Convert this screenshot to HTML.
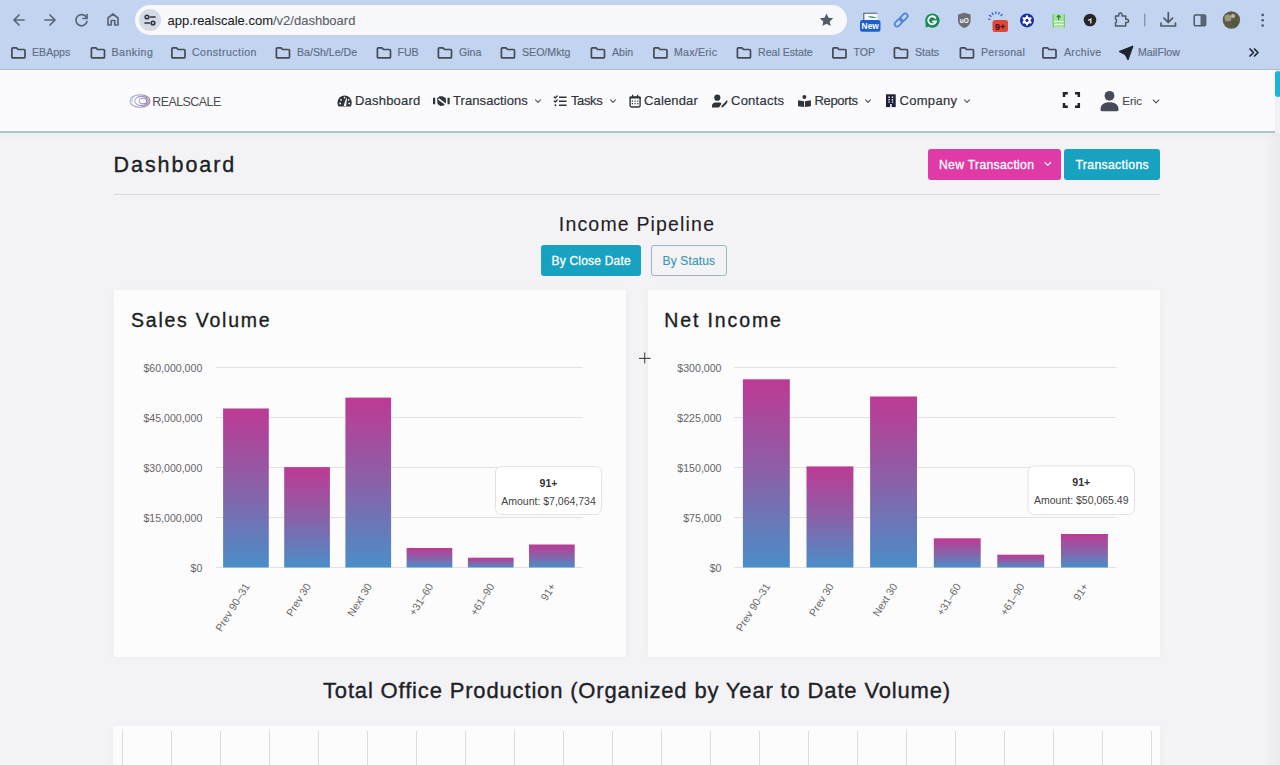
<!DOCTYPE html>
<html><head><meta charset="utf-8">
<style>
*{box-sizing:border-box;margin:0;padding:0}
html,body{width:1280px;height:765px;overflow:hidden;background:#f3f3f6;font-family:"Liberation Sans",sans-serif}
.a{position:absolute}
.chrome{left:0;top:0;width:1280px;height:70px;background:#c2d4ef;border-bottom:1px solid #aebbd0}
.pill{left:135px;top:5px;width:712px;height:30px;border-radius:15px;background:#f6f8fb}
.url{left:167.5px;top:12.6px;-webkit-text-stroke:0.1px currentColor;font-size:13px;color:#1f1f1f;white-space:nowrap}
.url span{color:#5b5f66}
.bm{top:46px;font-size:10.6px;color:#5f6d82;-webkit-text-stroke:0.15px currentColor;white-space:nowrap}
.nav{left:0;top:70px;width:1275px;height:63px;background:#fbfbfd;border-bottom:2px solid #a8c4cf;box-shadow:0 3px 8px rgba(0,0,0,.03)}
.ni{top:93px;font-size:13px;color:#30353c;white-space:nowrap;-webkit-text-stroke:0.2px currentColor}
.t{white-space:nowrap;color:#1d2025}
.btn{border-radius:3px}
.h{-webkit-text-stroke:0.35px currentColor}
.h2{-webkit-text-stroke:0.1px currentColor}
.card{background:#fcfcfd;box-shadow:0 2px 8px rgba(0,0,0,.035)}
</style></head><body>
<div class="a chrome"></div>
<!-- nav buttons -->
<svg class="a" style="left:0;top:0" width="135" height="40" viewBox="0 0 135 40">
 <g fill="none" stroke="#5b6677" stroke-width="1.7" stroke-linecap="round" stroke-linejoin="round">
  <path d="M24 20H14M19 15l-5 5 5 5"/>
  <path d="M45 20h10M50 15l5 5-5 5"/>
  <path d="M86.5 17.5A5.6 5.6 0 1 0 87 21.5"/>
  <path d="M87 14.5v4h-4"/>
  <path d="M108 25v-7l5-4 5 4v7h-3.2v-4.5h-3.6V25z"/>
 </g>
</svg>
<div class="a pill"></div>
<div class="a" style="left:139px;top:9px;width:22px;height:22px;border-radius:11px;background:#d4dbe7"></div>
<svg class="a" style="left:139px;top:9px" width="22" height="22" viewBox="0 0 22 22">
 <g fill="none" stroke="#2f3540" stroke-width="1.6" stroke-linecap="round">
  <circle cx="8" cy="8" r="1.8"/><path d="M11.5 8H16"/>
  <circle cx="14" cy="14" r="1.8"/><path d="M6 14h4.5"/>
 </g>
</svg>
<div class="a url">app.realscale.com<span>/v2/dashboard</span></div>
<svg class="a" style="left:818px;top:12px" width="17" height="16" viewBox="0 0 17 16">
 <path d="M8.5 1.5l2 4.3 4.7.5-3.5 3.2 1 4.6-4.2-2.4-4.2 2.4 1-4.6L1.8 6.3l4.7-.5z" fill="#535b68"/>
</svg>
<!-- extension icons -->
<svg class="a" style="left:850px;top:4px" width="430" height="34" viewBox="850 4 430 34">
 <!-- New -->
 <rect x="863.5" y="13" width="14" height="8" fill="#f7f8fa"/>
 <path d="M863.8 20.5V13.3h13.5" stroke="#4a5a6e" stroke-width="1.1" fill="none"/>
 <path d="M867.5 16.8q4-1.6 9.5 1.2q-5 .2-9.5-1.2z" fill="#2f7d6a"/>
 <rect x="860" y="20" width="20.5" height="11.8" rx="2.5" fill="#1e5fd0"/>
 <text x="870.2" y="29.2" font-size="8.4" font-weight="700" fill="#fff" text-anchor="middle" font-family="Liberation Sans">New</text>
 <!-- link -->
 <g fill="none" stroke="#4d84d8" stroke-width="1.7" transform="rotate(-45 901.2 20)">
  <rect x="893" y="17.6" width="9" height="4.8" rx="2.4"/>
  <rect x="900.4" y="17.6" width="9" height="4.8" rx="2.4"/>
 </g>
 <!-- grammarly -->
 <circle cx="932.4" cy="20.6" r="7.2" fill="#148a55"/><path d="M925.5 22l.3 5.5 4-1.5z" fill="#148a55"/>
 <path d="M935.5 18a4 4 0 1 0 .5 3.5h-3" fill="none" stroke="#fff" stroke-width="1.8" stroke-linecap="round"/>
 <!-- ublock -->
 <path d="M958 14.5l6.3-1.8 6.3 1.8v6c0 4-3 6.4-6.3 7.5-3.3-1.1-6.3-3.5-6.3-7.5z" fill="#6c6e74"/>
 <text x="964.3" y="23" font-size="6.5" font-weight="700" fill="#fff" text-anchor="middle" font-family="Liberation Sans">uO</text>
 <!-- 9+ icon -->
 <g stroke="#2f4fd0" stroke-width="1.2" stroke-linecap="round" fill="none">
  <path d="M990 19.5l-1.5-.5M991 16.5l-1.5-1.2M993 14.5l-.8-1.5M995.8 13.5v-1.6M998.6 14l.6-1.5M1001 15.5l1.2-1.1"/>
 </g>
 <rect x="992.5" y="20" width="15.5" height="12" rx="2.5" fill="#e0463a"/>
 <text x="1000.2" y="29.6" font-size="9" font-weight="700" fill="#3a1010" text-anchor="middle" font-family="Liberation Sans">9+</text>
 <!-- blue gear -->
 <circle cx="1027" cy="20.4" r="7" fill="#1b2ea6"/>
 <g fill="#fff" transform="translate(1027 20.4)">
  <circle r="3.6"/>
  <rect x="-1" y="-5" width="2" height="10"/>
  <rect x="-1" y="-5" width="2" height="10" transform="rotate(60)"/>
  <rect x="-1" y="-5" width="2" height="10" transform="rotate(120)"/>
 </g>
 <circle cx="1027" cy="20.4" r="1.6" fill="#1b2ea6"/>
 <!-- sheet -->
 <rect x="1052.5" y="14" width="12.5" height="13.5" rx="1" fill="#a6e49c"/>
 <path d="M1053.2 14v13.5M1064.3 14v13.5" stroke="#6cc070" stroke-width="1"/>
 <path d="M1054 21.5h9.5M1054 24.5h9.5" stroke="#e8f8e4" stroke-width="1"/>
 <path d="M1058.7 20v-4.5M1056.8 17.3l1.9-2 1.9 2" stroke="#2a7a3a" stroke-width="1.1" fill="none"/>
 <!-- dark circle -->
 <circle cx="1090" cy="20" r="6.3" fill="#262626"/>
 <path d="M1088 20.5l2.8-1.5v4.5" stroke="#e8e8e8" stroke-width="1.3" fill="none"/>
 <!-- puzzle -->
 <path d="M1115.5 16h3.2v-1.2a1.7 1.7 0 0 1 3.4 0V16h3.6v3.2h1.2a1.7 1.7 0 0 1 0 3.4h-1.2v3.4h-10.2v-3.3a2 2 0 0 0 0-3.6z" fill="none" stroke="#4f5866" stroke-width="1.5" stroke-linejoin="round"/>
 <!-- separator -->
 <path d="M1144.8 13.8v12.4" stroke="#7d8aa0" stroke-width="1.2"/>
 <!-- download -->
 <g fill="none" stroke="#4f5866" stroke-width="1.7" stroke-linecap="round" stroke-linejoin="round">
  <path d="M1168.3 12.5v10M1164 18.2l4.3 4.3 4.3-4.3M1161 23.2v2.8h14.5v-2.8"/>
 </g>
 <!-- sidebar -->
 <rect x="1194.2" y="15" width="11.4" height="10.8" rx="1.2" fill="none" stroke="#4f5866" stroke-width="1.5"/>
 <rect x="1200.5" y="15" width="5" height="10.8" fill="#5a6474"/>
 <!-- avatar -->
 <circle cx="1231.4" cy="20" r="8.7" fill="#5e5a48"/>
 <circle cx="1228" cy="18" r="3.5" fill="#9a9a7a"/>
 <circle cx="1235" cy="23" r="3" fill="#4a5a3a"/>
 <circle cx="1233" cy="16" r="2" fill="#c8b890"/>
 <!-- kebab -->
 <g fill="#4f5866"><circle cx="1262.7" cy="14.9" r="1.3"/><circle cx="1262.7" cy="20.2" r="1.3"/><circle cx="1262.7" cy="25.5" r="1.3"/></g>
</svg>
<!-- bookmarks -->
<svg class="a" style="left:0;top:40px" width="1280" height="28" viewBox="0 40 1280 28">
 <defs>
  <path id="fd" d="M0.9 1.9a1 1 0 0 1 1-1h3.6l1.5 1.6h6a1 1 0 0 1 1 1v6.4a1 1 0 0 1-1 1H1.9a1 1 0 0 1-1-1z" fill="none" stroke="#434a56" stroke-width="1.7" stroke-linejoin="round"/>
 </defs>
 <use href="#fd" x="11" y="47"/>
 <use href="#fd" x="90.5" y="47"/>
 <use href="#fd" x="171" y="47"/>
 <use href="#fd" x="275.5" y="47"/>
 <use href="#fd" x="376.5" y="47"/>
 <use href="#fd" x="437.5" y="47"/>
 <use href="#fd" x="500.5" y="47"/>
 <use href="#fd" x="590.5" y="47"/>
 <use href="#fd" x="653" y="47"/>
 <use href="#fd" x="736.5" y="47"/>
 <use href="#fd" x="832" y="47"/>
 <use href="#fd" x="893.5" y="47"/>
 <use href="#fd" x="959.5" y="47"/>
 <use href="#fd" x="1042" y="47"/>
 <path d="M1119 51.5l14-5.5-5 14-2.8-5.3z M1125.2 54.7l7.8-8.7" fill="#1f242c" stroke="#1f242c" stroke-width="1" stroke-linejoin="round"/>
 <path d="M1250 49l3.5 3.5-3.5 3.5M1254.5 49l3.5 3.5-3.5 3.5" fill="none" stroke="#1f242c" stroke-width="1.7" stroke-linecap="round" stroke-linejoin="round"/>
</svg>
<div class="a bm" style="left:32px">EBApps</div>
<div class="a bm" style="left:111.5px;letter-spacing:0.5px">Banking</div>
<div class="a bm" style="left:192px;letter-spacing:0.45px">Construction</div>
<div class="a bm" style="left:297px">Ba/Sh/Le/De</div>
<div class="a bm" style="left:397.5px">FUB</div>
<div class="a bm" style="left:459px">Gina</div>
<div class="a bm" style="left:522px">SEO/Mktg</div>
<div class="a bm" style="left:612px">Abin</div>
<div class="a bm" style="left:674px;letter-spacing:0.25px">Max/Eric</div>
<div class="a bm" style="left:758px">Real Estate</div>
<div class="a bm" style="left:853.5px">TOP</div>
<div class="a bm" style="left:915px">Stats</div>
<div class="a bm" style="left:981px;letter-spacing:0.3px">Personal</div>
<div class="a bm" style="left:1064px;letter-spacing:0.3px">Archive</div>
<div class="a bm" style="left:1138px">MailFlow</div>
<div class="a nav"></div>
<!-- logo -->
<svg class="a" style="left:128px;top:92px" width="24" height="18" viewBox="0 0 24 18">
 <defs><linearGradient id="lg" x1="0" x2="1"><stop offset="0" stop-color="#a9b6d8"/><stop offset="1" stop-color="#9a7aa8"/></linearGradient></defs>
 <g fill="none" stroke="url(#lg)" stroke-width="1.1">
  <ellipse cx="12" cy="9" rx="10" ry="6.3"/>
  <ellipse cx="13.5" cy="9" rx="6.8" ry="4.6"/>
  <ellipse cx="15" cy="9" rx="3.8" ry="2.8"/>
 </g>
 <path d="M2 9a10 6.3 0 0 1 8-6.2C6 4 4 7 5 11" fill="#b8c3e0" opacity=".6"/>
</svg>
<div class="a t" style="left:152.3px;top:96px;font-size:12.3px;line-height:12px;letter-spacing:-0.45px;color:#4a4b53">REALSCALE</div>
<!-- nav icons -->
<svg class="a" style="left:330px;top:88px" width="660" height="26" viewBox="330 88 660 26">
 <g fill="#2f343b">
  <!-- tachometer -->
  <path d="M338.6 106.6C337.9 105.6 337.5 104.1 337.5 102.5A7.1 7.1 0 0 1 351.7 102.5C351.7 104.1 351.3 105.6 350.6 106.6z"/>
  <!-- handshake -->
  <path d="M433 97.8h2.2v6.4H433z M447.5 97.8h2.2v6.4h-2.2z M437 98.5l2.5-2.3h3l3.2 1.8.4 4.5-2.3 3-3.5.6-2.7-2.2z"/>
  <!-- tasks -->
  <path d="M559 96.4h7.6v1.5H559zM559 100.5h7.6v1.5H559zM559 104.4h7.6v1.5H559z"/><circle cx="555.4" cy="105.2" r="1"/>
  <!-- calendar -->
  <rect x="630.1" y="97" width="10" height="10" rx="1.4" fill="none" stroke="#2f343b" stroke-width="1.4"/>
  <path d="M629.4 96.8h11.4v1.6h-11.4z M632 94.7h1.3v3h-1.3z M637 94.7h1.3v3h-1.3z"/>
  <path d="M631.8 100.4h1.2v1.3h-1.2zM634.5 100.4h1.2v1.3h-1.2zM637.2 100.4h1.2v1.3h-1.2zM631.8 102.9h1.2v1.3h-1.2zM634.5 102.9h1.2v1.3h-1.2zM637.2 102.9h1.2v1.3h-1.2z"/>
  <!-- contacts -->
  <circle cx="717.3" cy="97.7" r="3.1"/>
  <path d="M712 107.4v-1.8c0-1.9 1.5-3.2 3.3-3.2h3.6c1.3 0 2.2.5 2.7 1.1l-2.6 3.9z"/>
  <path d="M721.3 107.6l.4-1.9 4-4.1 1.4 1.4-4 4.1z"/>
  <circle cx="726.7" cy="101.5" r="0.9"/>
  <!-- reports -->
  <circle cx="804.4" cy="97" r="2"/>
  <path d="M798 100.3l6 0.9v5.9l-6-0.8z M810.9 100.3l-6 0.9v5.9l6-0.8z"/>
  <!-- company -->
  <path d="M886 94.3h9.7v12.8H886z" fill="#1c1f38"/>
 </g>
 <g fill="#fbfbfd">
  <path d="M437.8 99.5l1.3-1.3 7 5.6-1 1z"/><circle cx="340.2" cy="103.5" r="0.9"/><circle cx="341" cy="99.8" r="0.9"/><circle cx="344.6" cy="97.6" r="0.9"/><circle cx="348.6" cy="99.8" r="0.9"/><circle cx="349.2" cy="103.5" r="0.9"/><path d="M343.6 106h2.6l0.8-7.6-0.9-.1z"/>
  <path d="M888.4 96.6h1.4v1.3h-1.4zM891.8 96.6h1.4v1.3h-1.4zM888.4 99.1h1.4v1.3h-1.4zM891.8 99.1h1.4v1.3h-1.4zM888.4 101.5h1.4v1.3h-1.4zM891.8 101.5h1.4v1.3h-1.4zM890.1 104h1.6v3.1h-1.6z"/>
  
 </g>
 <g fill="none" stroke="#2f343b" stroke-width="1.4" stroke-linecap="round" stroke-linejoin="round">
  <path d="M554.3 97l1 1.1 1.9-2M554.3 101l1 1.1 1.9-2"/>
  <path d="M535.5 99.8l2.5 2.5 2.5-2.5M610.5 99.8l2.5 2.5 2.5-2.5M865.5 99.8l2.5 2.5 2.5-2.5M964.5 99.8l2.5 2.5 2.5-2.5" stroke-width="1.1" stroke="#555"/>
 </g>
</svg>
<div class="a ni" style="left:355px;letter-spacing:0.2px">Dashboard</div>
<div class="a ni" style="left:453px;letter-spacing:0.08px">Transactions</div>
<div class="a ni" style="left:571px;letter-spacing:-0.4px">Tasks</div>
<div class="a ni" style="left:644px;letter-spacing:0.15px">Calendar</div>
<div class="a ni" style="left:731px;letter-spacing:0.25px">Contacts</div>
<div class="a ni" style="left:814.5px;letter-spacing:-0.35px">Reports</div>
<div class="a ni" style="left:899.5px;letter-spacing:0.3px">Company</div>
<!-- fullscreen -->
<svg class="a" style="left:1060px;top:90px" width="22" height="22" viewBox="1060 90 22 22">
 <path d="M1064 97v-3.8h3.8M1075 93.2h3.8V97M1078.8 103v3.8H1075M1067.8 106.8H1064V103" fill="none" stroke="#222" stroke-width="2.5"/>
</svg>
<!-- user -->
<svg class="a" style="left:1098px;top:89px" width="64" height="24" viewBox="1098 89 64 24">
 <circle cx="1109.5" cy="95.8" r="4.9" fill="#474a5a"/>
 <path d="M1100.5 109.5c0-5 3.5-7.2 9-7.2s9 2.2 9 7.2c0 1-.6 1.7-1.5 1.7h-15c-.9 0-1.5-.7-1.5-1.7z" fill="#474a5a"/>
 <path d="M1153.3 100l2.8 2.8 2.8-2.8" fill="none" stroke="#555" stroke-width="1.1" stroke-linecap="round" stroke-linejoin="round"/>
</svg>
<div class="a ni" style="left:1122.3px;font-size:11.5px;top:94.6px;color:#444;-webkit-text-stroke:0.1px currentColor">Eric</div>
<!-- scrollbar thumb -->
<div class="a" style="left:1266px;top:133px;width:14px;height:632px;background:linear-gradient(90deg,rgba(236,236,240,0),#ececf0 70%)"></div>
<div class="a" style="left:1275px;top:71px;width:6px;height:26px;border-radius:3px;background:#1ab4de"></div>
<!--MAIN-->
<div class="a t h" style="left:113.5px;top:154px;font-size:21.5px;line-height:22px;letter-spacing:1.95px;color:#1b1f24">Dashboard</div>
<div class="a" style="left:114px;top:194px;width:1046px;height:1px;background:#d9d9de"></div>
<div class="a btn" style="left:928px;top:149px;width:133px;height:31px;background:#e03aa6"></div>
<div class="a t" style="left:939px;top:158.5px;font-size:12.2px;line-height:13px;letter-spacing:0.3px;color:#fff;-webkit-text-stroke:0.3px #fff">New Transaction</div>
<svg class="a" style="left:1043px;top:160px" width="10" height="8"><path d="M2 2.5l2.8 2.8 2.8-2.8" fill="none" stroke="#fff" stroke-width="1.1" stroke-linecap="round" stroke-linejoin="round"/></svg>
<div class="a btn" style="left:1064px;top:149px;width:96px;height:31px;background:#18a2c2"></div>
<div class="a t" style="left:1075.5px;top:158.5px;font-size:12.2px;line-height:13px;letter-spacing:0.35px;color:#fff;-webkit-text-stroke:0.3px #fff">Transactions</div>
<div class="a t h2" style="left:0;width:1274px;text-align:center;top:213.5px;font-size:19.5px;line-height:20px;letter-spacing:1.17px;color:#1e2126">Income Pipeline</div>
<div class="a btn" style="left:541px;top:245px;width:100px;height:31px;background:#18a2c2"></div>
<div class="a t" style="left:551.5px;top:254.5px;font-size:12px;line-height:13px;letter-spacing:0.2px;color:#fff;-webkit-text-stroke:0.3px #fff">By Close Date</div>
<div class="a btn" style="left:651px;top:245px;width:76px;height:31px;border:1px solid #98b7c0;background:transparent"></div>
<div class="a t" style="left:662.5px;top:254.5px;font-size:12px;line-height:13px;letter-spacing:0.15px;color:#3c97b0;-webkit-text-stroke:0.15px currentColor">By Status</div>

<div class="a card" style="left:114px;top:290px;width:512px;height:367px"></div>
<div class="a t h" style="left:131.1px;top:310.2px;font-size:19.5px;line-height:20px;letter-spacing:1.75px;color:#1b1e22">Sales Volume</div>
<svg class="a" style="left:114px;top:290px" width="512" height="367" viewBox="114 290 512 367">
<defs><linearGradient id="bg" x1="0" y1="0" x2="0" y2="1"><stop offset="0" stop-color="#bd3a94"/><stop offset="0.5" stop-color="#8a61a8"/><stop offset="1" stop-color="#4a8ec8"/></linearGradient></defs>
<path d="M216 367.5H582.5" stroke="#e2e2e4" stroke-width="1"/>
<text x="202.3" y="372.1" text-anchor="end" font-size="10.6" fill="#666" font-family="Liberation Sans">$60,000,000</text>
<path d="M216 417.5H582.5" stroke="#e2e2e4" stroke-width="1"/>
<text x="202.3" y="422.1" text-anchor="end" font-size="10.6" fill="#666" font-family="Liberation Sans">$45,000,000</text>
<path d="M216 467.5H582.5" stroke="#e2e2e4" stroke-width="1"/>
<text x="202.3" y="472.1" text-anchor="end" font-size="10.6" fill="#666" font-family="Liberation Sans">$30,000,000</text>
<path d="M216 517.5H582.5" stroke="#e2e2e4" stroke-width="1"/>
<text x="202.3" y="522.1" text-anchor="end" font-size="10.6" fill="#666" font-family="Liberation Sans">$15,000,000</text>
<path d="M216 567.5H582.5" stroke="#e2e2e4" stroke-width="1"/>
<text x="202.3" y="572.1" text-anchor="end" font-size="10.6" fill="#666" font-family="Liberation Sans">$0</text>
<rect x="223.1" y="408.5" width="45.7" height="159.0" fill="url(#bg)"/>
<rect x="284.2" y="467.1" width="45.7" height="100.4" fill="url(#bg)"/>
<rect x="345.4" y="397.6" width="45.7" height="169.9" fill="url(#bg)"/>
<rect x="406.6" y="548" width="45.7" height="19.5" fill="url(#bg)"/>
<rect x="467.9" y="557.7" width="45.7" height="9.8" fill="url(#bg)"/>
<rect x="529.0" y="544.5" width="45.7" height="23.0" fill="url(#bg)"/>
<text transform="translate(247.1,584.5) rotate(-58)" text-anchor="end" font-size="10.6" fill="#666" font-family="Liberation Sans" dy="3.5">Prev 90–31</text>
<text transform="translate(308.3,584.5) rotate(-58)" text-anchor="end" font-size="10.6" fill="#666" font-family="Liberation Sans" dy="3.5">Prev 30</text>
<text transform="translate(369.5,584.5) rotate(-58)" text-anchor="end" font-size="10.6" fill="#666" font-family="Liberation Sans" dy="3.5">Next 30</text>
<text transform="translate(430.7,584.5) rotate(-58)" text-anchor="end" font-size="10.6" fill="#666" font-family="Liberation Sans" dy="3.5">+31–60</text>
<text transform="translate(491.9,584.5) rotate(-58)" text-anchor="end" font-size="10.6" fill="#666" font-family="Liberation Sans" dy="3.5">+61–90</text>
<text transform="translate(553.1,584.5) rotate(-58)" text-anchor="end" font-size="10.6" fill="#666" font-family="Liberation Sans" dy="3.5">91+</text>
<rect x="495.5" y="466.5" width="106.0" height="48.0" rx="6" fill="#fff" stroke="#e3e3e6" stroke-width="1"/>
<text x="548.5" y="486.5" text-anchor="middle" font-size="10.6" font-weight="700" fill="#333" font-family="Liberation Sans">91+</text>
<text x="548.5" y="504.5" text-anchor="middle" font-size="10.5" fill="#444" font-family="Liberation Sans">Amount: $7,064,734</text>
</svg>
<div class="a card" style="left:648px;top:290px;width:512px;height:367px"></div>
<div class="a t h" style="left:664.3px;top:310.2px;font-size:19.5px;line-height:20px;letter-spacing:1.87px;color:#1b1e22">Net Income</div>
<svg class="a" style="left:648px;top:290px" width="512" height="367" viewBox="648 290 512 367">
<defs><linearGradient id="bg" x1="0" y1="0" x2="0" y2="1"><stop offset="0" stop-color="#bd3a94"/><stop offset="0.5" stop-color="#8a61a8"/><stop offset="1" stop-color="#4a8ec8"/></linearGradient></defs>
<path d="M734 367.5H1116.5" stroke="#e2e2e4" stroke-width="1"/>
<text x="721.5" y="372.1" text-anchor="end" font-size="10.6" fill="#666" font-family="Liberation Sans">$300,000</text>
<path d="M734 417.5H1116.5" stroke="#e2e2e4" stroke-width="1"/>
<text x="721.5" y="422.1" text-anchor="end" font-size="10.6" fill="#666" font-family="Liberation Sans">$225,000</text>
<path d="M734 467.5H1116.5" stroke="#e2e2e4" stroke-width="1"/>
<text x="721.5" y="472.1" text-anchor="end" font-size="10.6" fill="#666" font-family="Liberation Sans">$150,000</text>
<path d="M734 517.5H1116.5" stroke="#e2e2e4" stroke-width="1"/>
<text x="721.5" y="522.1" text-anchor="end" font-size="10.6" fill="#666" font-family="Liberation Sans">$75,000</text>
<path d="M734 567.5H1116.5" stroke="#e2e2e4" stroke-width="1"/>
<text x="721.5" y="572.1" text-anchor="end" font-size="10.6" fill="#666" font-family="Liberation Sans">$0</text>
<rect x="742.9" y="379.3" width="46.9" height="188.2" fill="url(#bg)"/>
<rect x="806.5" y="466.4" width="46.9" height="101.1" fill="url(#bg)"/>
<rect x="870.1" y="396.5" width="46.9" height="171.0" fill="url(#bg)"/>
<rect x="933.8" y="538.3" width="46.9" height="29.2" fill="url(#bg)"/>
<rect x="997.3" y="554.7" width="46.9" height="12.8" fill="url(#bg)"/>
<rect x="1061.0" y="534" width="46.9" height="33.5" fill="url(#bg)"/>
<text transform="translate(767.6,584.5) rotate(-58)" text-anchor="end" font-size="10.6" fill="#666" font-family="Liberation Sans" dy="3.5">Prev 90–31</text>
<text transform="translate(831.2,584.5) rotate(-58)" text-anchor="end" font-size="10.6" fill="#666" font-family="Liberation Sans" dy="3.5">Prev 30</text>
<text transform="translate(894.8,584.5) rotate(-58)" text-anchor="end" font-size="10.6" fill="#666" font-family="Liberation Sans" dy="3.5">Next 30</text>
<text transform="translate(958.4,584.5) rotate(-58)" text-anchor="end" font-size="10.6" fill="#666" font-family="Liberation Sans" dy="3.5">+31–60</text>
<text transform="translate(1022.0,584.5) rotate(-58)" text-anchor="end" font-size="10.6" fill="#666" font-family="Liberation Sans" dy="3.5">+61–90</text>
<text transform="translate(1085.6,584.5) rotate(-58)" text-anchor="end" font-size="10.6" fill="#666" font-family="Liberation Sans" dy="3.5">91+</text>
<rect x="1028" y="466" width="106.5" height="48.5" rx="6" fill="#fff" stroke="#e3e3e6" stroke-width="1"/>
<text x="1081.25" y="486" text-anchor="middle" font-size="10.6" font-weight="700" fill="#333" font-family="Liberation Sans">91+</text>
<text x="1081.25" y="504" text-anchor="middle" font-size="10.5" fill="#444" font-family="Liberation Sans">Amount: $50,065.49</text>
</svg>
<svg class="a" style="left:636px;top:350px" width="18" height="18" viewBox="636 350 18 18"><path d="M644.7 352.5v11M639 358.3h11.5" stroke="#fff" stroke-width="3"/><path d="M644.7 352.5v11M639 358.3h11.5" stroke="#4a4a4a" stroke-width="1.2"/></svg>
<div class="a t h" style="left:0;width:1274px;text-align:center;top:679.5px;font-size:22px;line-height:22px;letter-spacing:0.84px;color:#1e2126">Total Office Production (Organized by Year to Date Volume)</div>
<div class="a card" style="left:113px;top:725.5px;width:1047px;height:60px"></div>

<div class="a" style="left:122px;top:731px;width:1px;height:40px;background:#dcdce0"></div><div class="a" style="left:171px;top:731px;width:1px;height:40px;background:#dcdce0"></div><div class="a" style="left:220px;top:731px;width:1px;height:40px;background:#dcdce0"></div><div class="a" style="left:269px;top:731px;width:1px;height:40px;background:#dcdce0"></div><div class="a" style="left:318px;top:731px;width:1px;height:40px;background:#dcdce0"></div><div class="a" style="left:367px;top:731px;width:1px;height:40px;background:#dcdce0"></div><div class="a" style="left:416px;top:731px;width:1px;height:40px;background:#dcdce0"></div><div class="a" style="left:465px;top:731px;width:1px;height:40px;background:#dcdce0"></div><div class="a" style="left:514px;top:731px;width:1px;height:40px;background:#dcdce0"></div><div class="a" style="left:563px;top:731px;width:1px;height:40px;background:#dcdce0"></div><div class="a" style="left:612px;top:731px;width:1px;height:40px;background:#dcdce0"></div><div class="a" style="left:661px;top:731px;width:1px;height:40px;background:#dcdce0"></div><div class="a" style="left:710px;top:731px;width:1px;height:40px;background:#dcdce0"></div><div class="a" style="left:759px;top:731px;width:1px;height:40px;background:#dcdce0"></div><div class="a" style="left:808px;top:731px;width:1px;height:40px;background:#dcdce0"></div><div class="a" style="left:857px;top:731px;width:1px;height:40px;background:#dcdce0"></div><div class="a" style="left:906px;top:731px;width:1px;height:40px;background:#dcdce0"></div><div class="a" style="left:955px;top:731px;width:1px;height:40px;background:#dcdce0"></div><div class="a" style="left:1004px;top:731px;width:1px;height:40px;background:#dcdce0"></div><div class="a" style="left:1053px;top:731px;width:1px;height:40px;background:#dcdce0"></div><div class="a" style="left:1102px;top:731px;width:1px;height:40px;background:#dcdce0"></div><div class="a" style="left:1151px;top:731px;width:1px;height:40px;background:#dcdce0"></div>
<!--/MAIN-->
</body></html>
